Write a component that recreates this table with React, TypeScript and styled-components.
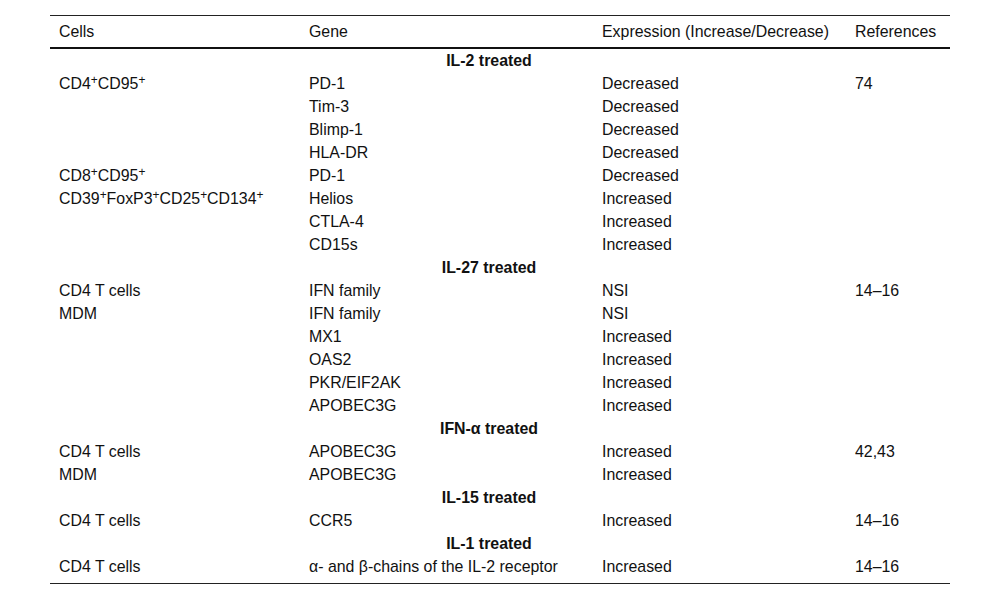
import React from "react";
import styled, { createGlobalStyle } from "styled-components";

const Global = createGlobalStyle`
  html, body { margin: 0; padding: 0; background: #ffffff; }
  body { font-family: "Liberation Sans", Arial, Helvetica, sans-serif; color: #111; }
`;

const Page = styled.div`
  padding: 15px 50px 0 50px;
`;

const Table = styled.table`
  width: 900px;
  border-collapse: collapse;
  table-layout: fixed;
  font-size: 15.9px;
  border-top: 1px solid #222;
  border-bottom: 1px solid #222;
`;

const HeadCell = styled.th`
  text-align: left;
  font-weight: normal;
  padding: 7px 9px 6px 9px;
  line-height: 18px;
  border-bottom: 2px solid #111;
  white-space: nowrap;
`;

const Cell = styled.td<{ $last?: boolean }>`
  padding: 3px 9px ${(p) => (p.$last ? "6.5px" : "2px")} 9px;
  line-height: 18px;
  vertical-align: top;
  white-space: nowrap;
`;

const SectionCell = styled.td`
  text-align: center;
  font-weight: bold;
  padding: 3px 31px 2px 9px;
  line-height: 18px;
`;

const Sup = styled.sup`
  font-size: 0.75em;
  line-height: 0;
  vertical-align: 0.42em;
`;

type Row = { cells?: React.ReactNode; gene: string; expr: string; ref?: string };
type Section = { title: string; rows: Row[] };

const pos = (parts: string[]) => (
  <>
    {parts.map((p, i) => (
      <React.Fragment key={i}>
        {p}
        <Sup>+</Sup>
      </React.Fragment>
    ))}
  </>
);

const sections: Section[] = [
  {
    title: "IL-2 treated",
    rows: [
      { cells: pos(["CD4", "CD95"]), gene: "PD-1", expr: "Decreased", ref: "74" },
      { gene: "Tim-3", expr: "Decreased" },
      { gene: "Blimp-1", expr: "Decreased" },
      { gene: "HLA-DR", expr: "Decreased" },
      { cells: pos(["CD8", "CD95"]), gene: "PD-1", expr: "Decreased" },
      { cells: pos(["CD39", "FoxP3", "CD25", "CD134"]), gene: "Helios", expr: "Increased" },
      { gene: "CTLA-4", expr: "Increased" },
      { gene: "CD15s", expr: "Increased" },
    ],
  },
  {
    title: "IL-27 treated",
    rows: [
      { cells: "CD4 T cells", gene: "IFN family", expr: "NSI", ref: "14–16" },
      { cells: "MDM", gene: "IFN family", expr: "NSI" },
      { gene: "MX1", expr: "Increased" },
      { gene: "OAS2", expr: "Increased" },
      { gene: "PKR/EIF2AK", expr: "Increased" },
      { gene: "APOBEC3G", expr: "Increased" },
    ],
  },
  {
    title: "IFN-α treated",
    rows: [
      { cells: "CD4 T cells", gene: "APOBEC3G", expr: "Increased", ref: "42,43" },
      { cells: "MDM", gene: "APOBEC3G", expr: "Increased" },
    ],
  },
  {
    title: "IL-15 treated",
    rows: [{ cells: "CD4 T cells", gene: "CCR5", expr: "Increased", ref: "14–16" }],
  },
  {
    title: "IL-1 treated",
    rows: [
      {
        cells: "CD4 T cells",
        gene: "α- and β-chains of the IL-2 receptor",
        expr: "Increased",
        ref: "14–16",
      },
    ],
  },
];

export default function App() {
  return (
    <>
      <Global />
      <Page>
        <Table>
          <colgroup>
            <col style={{ width: 250 }} />
            <col style={{ width: 293 }} />
            <col style={{ width: 253 }} />
            <col style={{ width: 104 }} />
          </colgroup>
          <thead>
            <tr>
              <HeadCell>Cells</HeadCell>
              <HeadCell>Gene</HeadCell>
              <HeadCell>Expression (Increase/Decrease)</HeadCell>
              <HeadCell>References</HeadCell>
            </tr>
          </thead>
          <tbody>
            {sections.map((s, si) => (
              <React.Fragment key={s.title}>
                <tr>
                  <SectionCell colSpan={4}>{s.title}</SectionCell>
                </tr>
                {s.rows.map((r, ri) => {
                  const last = si === sections.length - 1 && ri === s.rows.length - 1;
                  return (
                    <tr key={ri}>
                      <Cell $last={last}>{r.cells}</Cell>
                      <Cell $last={last}>{r.gene}</Cell>
                      <Cell $last={last}>{r.expr}</Cell>
                      <Cell $last={last}>{r.ref}</Cell>
                    </tr>
                  );
                })}
              </React.Fragment>
            ))}
          </tbody>
        </Table>
      </Page>
    </>
  );
}
